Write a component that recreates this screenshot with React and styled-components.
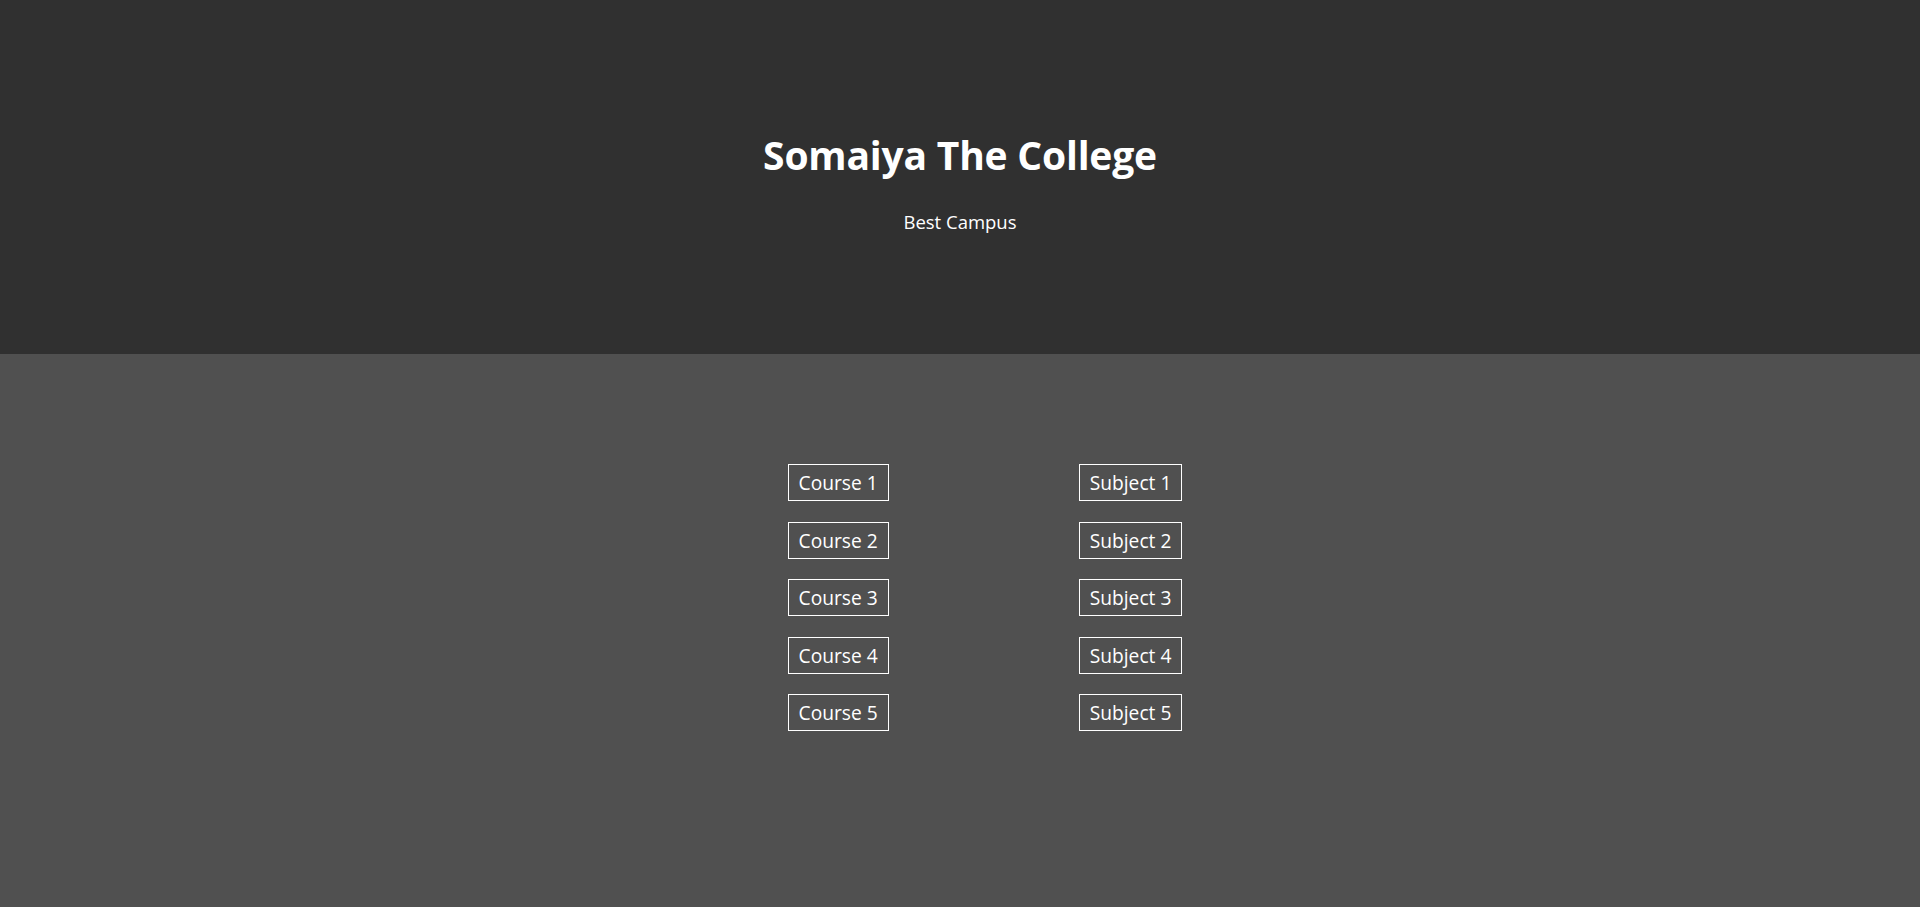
import React from 'react';
import styled, { createGlobalStyle } from 'styled-components';

const GlobalStyle = createGlobalStyle`
    html, body {
        margin: 0;
        padding: 0;
        background: #505050;
        font-family: "Open Sans", "Noto Sans", "Liberation Sans", sans-serif;
        color: #ffffff;
    }
`;

const Header = styled.header`
    display: flex;
    flex-direction: column;
    align-items: center;
    height: 354px;
    box-sizing: border-box;
    padding-top: 128px;
    background: #303030;
`;

const Title = styled.h1`
    margin: 0;
    font-size: 39px;
    font-weight: 700;
    line-height: 54px;
    letter-spacing: -0.2px;
`;

const Subtitle = styled.p`
    margin: 26px 0 0;
    font-size: 18.5px;
    line-height: 27px;
`;

const Main = styled.main`
    display: flex;
    flex-direction: row;
    justify-content: center;
    gap: 190px;
    padding: 110px 0 0 50px;
    min-height: calc(100vh - 354px);
    box-sizing: border-box;
    background: #505050;
`;

const Column = styled.div`
    display: flex;
    flex-direction: column;
    align-items: flex-start;
    gap: 20.5px;
`;

const ItemButton = styled.div`
    height: 37px;
    box-sizing: border-box;
    padding: 0 10px;
    border: 1px solid #ffffff;
    font-size: 19.2px;
    line-height: 35px;
    white-space: nowrap;
`;

const courses = [1, 2, 3, 4, 5];

export default function App() {
    return <>
        <GlobalStyle />
        <Header>
            <Title>Somaiya The College</Title>
            <Subtitle>Best Campus</Subtitle>
        </Header>
        <Main>
            <Column>
                {courses.map(n => <ItemButton key={n}>Course {n}</ItemButton>)}
            </Column>
            <Column>
                {courses.map(n => <ItemButton key={n}>Subject {n}</ItemButton>)}
            </Column>
        </Main>
    </>;
}
